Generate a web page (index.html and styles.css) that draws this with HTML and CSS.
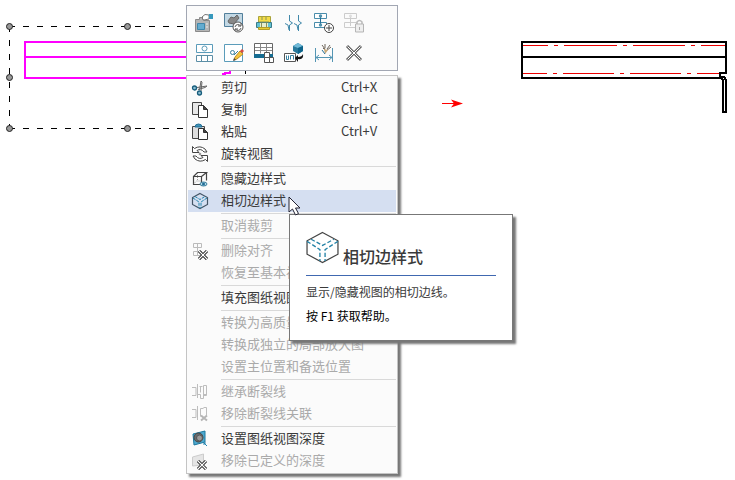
FILE: index.html
```html
<!DOCTYPE html>
<html lang="zh-CN">
<head>
<meta charset="utf-8">
<title>工程图</title>
<link rel="stylesheet" href="styles.css">
</head>
<body>
<main class="sheet">
  <svg class="drawing" aria-hidden="true" shape-rendering="crispEdges">
    <g class="selection">
      <path d="M9 26.500H245M9 128.500H245M9.500 26V128M245.500 26V128"/>
    </g>
    <path class="part selected" d="M230 78H25V42H230M25 57H230M222 74h3v-1h5v-3"/>
    <g class="handles" shape-rendering="auto">
      <circle cx="9.500" cy="26.500" r="3"/><circle cx="127.500" cy="26.500" r="3"/>
      <circle cx="9.500" cy="77.500" r="3"/>
      <circle cx="9.500" cy="128.500" r="3"/><circle cx="127.500" cy="128.500" r="3"/>
    </g>
    <path class="tangent" d="M523 45.500h25m6 0h4m6 0h53m6 0h4m6 0h52m6 0h4m6 0h25M522 73.500h25m6 0h4m6 0h51m6 0h4m6 0h51m6 0h4m6 0h23"/>
    <path class="part" d="M720 78H522V42H726V73H720V77H724L726 80V112H723V80L720 77M522 57H726"/>
    <path class="arrow-line" d="M442 103.500H454"/>
    <path class="arrow-head" shape-rendering="auto" d="M451 99.500L463 103.500L451 107.500L454 103.500Z"/>
  </svg>

  <div class="toolbar" role="toolbar" aria-label="视图工具">
    <button aria-label="属性"><svg viewBox="0 0 20 20"><path d="M1.500 6.500h4v-2h4v3h6v11h-14z" fill="#b5b5b5" stroke="#8a8a8a"/><path d="M3.500 10.500h7v6h-7z" fill="#64acd0" stroke="#3f86aa"/><path d="M8 4l3-2.500 4 .500v4l-5 1-2-1 1-1z" fill="#fff" stroke="#777"/><path d="M15 1h4v5h-4z" fill="#3799bd"/><path d="M12 11h2m-2 3h2" stroke="#eee"/></svg></button>
    <button aria-label="更新视图"><svg viewBox="0 0 20 20"><path d="M.500 .500h18v13H.500z" fill="#c3d8e4" stroke="#527f9b"/><path d="M4 8l3-4 3 1 3-3 2 3-5 6-5-1z" fill="#888" stroke="#666"/><circle cx="14" cy="14" r="5" fill="#fff" stroke="#555"/><path d="M11 14a3 3 0 0 1 5.500-1M17 15a3 3 0 0 1-5.500 1M17 10v3h-3M11 18v-2h3" fill="none" stroke="#555"/></svg></button>
    <button aria-label="显示样式"><svg viewBox="0 0 20 20"><path d="M4.500 3.500h12v7h-12z" fill="#f4dc45" stroke="#a9a23b"/><path d="M2.500 9.500h15v5h-15z" fill="#62c1d2" stroke="#397b89"/><path d="M4.500 14.500h11v2h-11z" fill="#e8cd31" stroke="#b29d2a"/><path d="M6 10h8v4H6z" fill="#e5eed0"/><path d="M8 4v3m4-3v3M7.500 10v4m5-4v4M5 9h10" stroke="#8a925c"/></svg></button>
    <button aria-label="断裂视图"><svg viewBox="0 0 20 20"><path d="M5.500 2v6l3 2-3 2v6M1 10.500l3 1.500 1 5M14.500 2v6l3 2-3 2v6M10 10.500l3 1.500 1 5" fill="none" stroke="#4189aa"/></svg></button>
    <button aria-label="添加对齐"><svg viewBox="0 0 20 20"><path d="M.500 .500h12v5H.500zM.500 9.500h12v5H.500z" fill="#fff" stroke="#4a8dab"/><path d="M6.500 3v9" stroke="#236f98"/><circle cx="6.500" cy="3" r="1.700" fill="#4f91ad"/><circle cx="6.500" cy="12" r="1.700" fill="#4f91ad"/><circle cx="15" cy="15" r="4.500" fill="#fff" stroke="#444"/><path d="M12 15h6m-3-3v6" stroke="#444"/></svg></button>
    <button aria-label="锁定对齐" disabled><svg viewBox="0 0 20 20"><path d="M.500 .500h12v5H.500zM.500 9.500h12v5H.500zM6.500 2v11" fill="none" stroke="#ccc"/><circle cx="6.500" cy="3" r="1.500" fill="#ddd"/><path d="M13 11V9q2.500-3 5 0v2" fill="none" stroke="#bbb" stroke-width="1.500"/><path d="M11.500 11h8v8h-8z" fill="#eee" stroke="#b5b5b5"/><path d="M15.500 14v3" stroke="#aaa"/></svg></button>
    <button aria-label="投影视图"><svg viewBox="0 0 20 20"><path d="M2.500 1.500h16v8h-16z" fill="#fff" stroke="#5b9cba"/><path d="M2.500 12.500h16v6h-16zM7.500 12.500v6m6-6v6" fill="#fff" stroke="#5b8ea6"/><circle cx="10.500" cy="5.500" r="2.500" fill="#fff" stroke="#5b9cba"/></svg></button>
    <button aria-label="编辑草图"><svg viewBox="0 0 20 20"><path d="M.500 1.500h18v17H.500z" fill="#fff" stroke="#5b9cba"/><circle cx="8.500" cy="9.500" r="2" fill="none" stroke="#397f9d"/><path d="M10 12l4-4" stroke="#397f9d"/><path d="M10 17l1-3 5-6 3 3-6 5z" fill="#f5c53b" stroke="#b98a2c"/><path d="M16 8l2-2 2 2-2 2z" fill="#d84a42"/><path d="M9 18l1-3 2 2z" fill="#444"/></svg></button>
    <button aria-label="表格"><svg viewBox="0 0 20 20"><path d="M.500 .500h18v14H.500z" fill="#fff" stroke="#666"/><path d="M0 11h19v4H0z" fill="#156c91"/><path d="M1 4.500h17M1 7.500h17M6.500 .500v10m6-10v10" stroke="#888"/><path d="M10.500 14.500h5v5h-5zM15.500 14.500h4v5h-4zM10.500 9.500h5v5h-5z" fill="#fff" stroke="#555"/></svg></button>
    <button aria-label="打开零件"><svg viewBox="0 0 20 20"><path d="M9 3l5-3 5 3v5l-5 3-5-3z" fill="#28799c"/><path d="M9 3l5-3 5 3-5 2z" fill="#71b9d7"/><path d="M14 5v6l5-3V3z" fill="#0d648b"/><path d="M.500 10.500h11v8H.500z" fill="#fff" stroke="#555"/><path d="M2.500 12.500v4h2v-4M6.500 16.500v-4h3v4" fill="none" stroke="#36809e"/><path d="M19 11q1 6-5 5v3l-3-4 3-3v2q4 0 5-3z" fill="#111"/></svg></button>
    <button aria-label="自动尺寸"><svg viewBox="0 0 20 20"><path d="M1.500 5v14M18.500 5v14M2 14.500h16M5 12l-3 2.500L5 17m10-5l3 2.500-3 2.500" fill="none" stroke="#5495b3"/><path d="M8 2l3 4m0-5v4m5-3l-3 4m4-2l-5 4-3-3" stroke="#6f665b" fill="none"/><path d="M10 6l4 1-3 4z" fill="#c7a878"/><path d="M8 7l3 4" stroke="#236f98"/></svg></button>
    <button aria-label="删除"><svg viewBox="0 0 20 20"><path d="M3 3l14 14M17 3L3 17" stroke="#666" stroke-width="3"/><path d="M3.500 3.500l13 13m0-13l-13 13" stroke="#fff"/></svg></button>
  </div>

  <div class="menu" role="menu">
    <button role="menuitem"><svg viewBox="0 0 18 18"><path d="M6 8.500l10-1.500-2 1.500-7 2M8.500 11l1.500-9 1 1-1 9" fill="#eee" stroke="#666"/><circle cx="3.500" cy="9" r="2" fill="#8bbccf" stroke="#175d7c" stroke-width="1.300"/><circle cx="8.500" cy="14" r="2" fill="#8bbccf" stroke="#175d7c" stroke-width="1.300"/></svg><span>剪切</span><kbd>Ctrl+X</kbd></button>
    <button role="menuitem"><svg viewBox="0 0 18 18"><path d="M1.500 1.500h9v12h-9z" fill="#e7e7e7" stroke="#444"/><path d="M7.500 4.500h5l4 4v8h-9z" fill="#fff" stroke="#333"/><path d="M12.500 4.500v4h4z" fill="#444" stroke="#333"/></svg><span>复制</span><kbd>Ctrl+C</kbd></button>
    <button role="menuitem"><svg viewBox="0 0 18 18"><path d="M1.500 3.500h12v12h-12z" fill="#dedede" stroke="#444"/><path d="M4 4q0-3 3.500-3T11 4z" fill="#4194b6" stroke="#236f98"/><path d="M7.500 5.500h5l4 4v7h-9z" fill="#fff" stroke="#333"/><path d="M12.500 5.500v4h4z" fill="#444" stroke="#333"/></svg><span>粘贴</span><kbd>Ctrl+V</kbd></button>
    <button role="menuitem"><svg viewBox="0 0 18 18"><path d="M1.500 7.500v-6l2 2Q9 0 14 4l2 3h-3Q10 3 6 5.500l2 2zM16.500 10.500v6l-2-2Q9 18 4 14l-2-3h3q3 4 7 1.500l-2-2z" fill="#fff" stroke="#444"/><circle cx="9" cy="9" r="1.300" fill="#999"/></svg><span>旋转视图</span></button>
    <hr>
    <button role="menuitem"><svg viewBox="0 0 18 18"><path d="M2.500 6.500h8v8h-8zM2.500 6.500l4-4h9l-5 4M15.500 2.500v8" fill="none" stroke="#444" stroke-width="1.200"/><path d="M6.500 3v8h4M5.500 11l-3 3" fill="none" stroke="#999" stroke-dasharray="1 1"/><ellipse cx="12.500" cy="14" rx="3.500" ry="2" fill="#b8dae8" stroke="#397f9d"/><circle cx="12.500" cy="14" r="1.500" fill="#236f98"/></svg><span>隐藏边样式</span></button>
    <button role="menuitem" class="active"><svg viewBox="0 0 18 18"><path d="M9 1.500l7.500 4v7L9 16.500l-7.500-4v-7z" fill="none" stroke="#456" stroke-width="1.200"/><path d="M2 6l6 4v6M16 6l-6 4v6M4 4.500l5 3 5-3" fill="none" stroke="#2284ad" stroke-dasharray="3 1"/></svg><span>相切边样式</span></button>
    <hr>
    <button role="menuitem" disabled><i></i><span>取消裁剪</span></button>
    <hr>
    <button role="menuitem" disabled><svg viewBox="0 0 18 18"><path d="M2.500 1.500h8v4h-8zM2.500 9.500h8v4h-8zM6.500 1.500v12" fill="none" stroke="#bbb"/><path d="M8 9l8 8m0-8l-8 8" stroke="#111" stroke-width="3"/><path d="M8 9l8 8m0-8l-8 8" stroke="#fff" stroke-width="1.200"/></svg><span>删除对齐</span></button>
    <button role="menuitem" disabled><i></i><span>恢复至基本视图</span></button>
    <hr>
    <button role="menuitem"><i></i><span>填充图纸视图</span></button>
    <hr>
    <button role="menuitem" disabled><i></i><span>转换为高质量</span></button>
    <button role="menuitem" disabled><i></i><span class="wide">转换成独立的局部放大图</span></button>
    <button role="menuitem" disabled><i></i><span class="wide">设置主位置和备选位置</span></button>
    <hr>
    <button role="menuitem" disabled><svg viewBox="0 0 18 18"><path d="M1 4.500h4v8H1M6.500 1v14M8.500 3.500h3M12.500 2.500h3v10h-3zM9.500 3.500v6M6.500 11.500h3v4h3v-4h3" fill="none" stroke="#bdbdbd"/></svg><span>继承断裂线</span></button>
    <button role="menuitem" disabled><svg viewBox="0 0 18 18"><path d="M1 4.500h4v8H1M6.500 1v14M9.500 3.500h3m0-1h3v8M9.500 3.500v8" fill="none" stroke="#bdbdbd"/><path d="M10 10.500l6 5m0-5l-6 5" stroke="#b5b5b5" stroke-width="2"/></svg><span>移除断裂线关联</span></button>
    <hr>
    <button role="menuitem"><svg viewBox="0 0 18 18"><path d="M2 4l12-3v11L3 15z" fill="#4da9d0" stroke="#1d789e"/><circle cx="7.500" cy="7.500" r="4.500" fill="#686b6d" stroke="#444"/><circle cx="8.500" cy="8" r="3" fill="#999" stroke="#555"/><path d="M13 13l3 3m-3-1v-2h2" fill="none" stroke="#2383ae"/></svg><span>设置图纸视图深度</span></button>
    <button role="menuitem" disabled><svg viewBox="0 0 18 18"><path d="M1.500 5l11-3v11l-11 1z" fill="#e5e5e5" stroke="#ccc"/><path d="M7 9l8 8m0-8l-8 8" stroke="#111" stroke-width="3"/><path d="M7 9l8 8m0-8l-8 8" stroke="#fff" stroke-width="1.200"/></svg><span>移除已定义的深度</span></button>
  </div>

  <section class="tooltip" role="tooltip">
    <header>
      <svg viewBox="0 0 32 32" aria-hidden="true"><path d="M16 1.500l15 8v13l-15 8-15-8v-13z" fill="none" stroke="#444" stroke-width="1.200"/><path d="M1 10l12.500 8v11M31 10l-12.500 8v11M5 8l11 6 11-6" fill="none" stroke="#2482a6" stroke-width="1.300" stroke-dasharray="4 2"/></svg>
      <h1>相切边样式</h1>
    </header>
    <p>显示/隐藏视图的相切边线。</p>
    <p class="help">按 F1 获取帮助。</p>
  </section>

  <svg class="pointer" viewBox="0 0 14 20" aria-hidden="true"><path d="M1 1v15l3.500-3 3 6 3-1.500-3-5.500H12z" fill="#fff" stroke="#223"/></svg>
</main>
</body>
</html>
```
FILE: styles.css
```css
* { box-sizing: border-box; }

body {
  margin: 0;
  background: #fff;
  color: #3a3a3a;
  font-family: "Noto Sans CJK SC", "Noto Sans", sans-serif;
  font-size: 13px;
}

.sheet {
  position: relative;
  min-height: 100vh;
  overflow: hidden;
}

.drawing {
  position: absolute;
  inset: 0;
  width: 100%;
  height: 100%;
}

.selection { fill: none; stroke: #000; stroke-dasharray: 6 8; }
.handles { fill: #999; stroke: #222; }
.part { fill: none; stroke: #000; stroke-width: 2; }
.part.selected { stroke: #f0f; }
.tangent { fill: none; stroke: #e00; }
.arrow-line { stroke: #f00; }
.arrow-head { fill: #f00; }

button {
  margin: 0;
  padding: 0;
  border: 0;
  background: none;
  color: inherit;
  font: inherit;
}

/* Floating tool strip */
.toolbar {
  position: absolute;
  top: 5px;
  left: 186px;
  display: grid;
  grid-template-columns: repeat(6, 30px);
  grid-auto-rows: 30px;
  width: 212px;
  padding: 2px;
  border: 1px solid #a2a7b3;
  background: #fbfbfb;
}

.toolbar button {
  display: grid;
  place-items: center;
}

.toolbar svg { width: 20px; height: 20px; }

/* Context menu */
.menu {
  position: absolute;
  top: 75px;
  left: 186px;
  width: 212px;
  padding: 1px;
  border: 1px solid #c4c4c4;
  background: #fbfbfb;
  box-shadow: 3px 3px 2px #777;
}

.menu button {
  display: grid;
  grid-template-columns: 18px 108px 1fr;
  column-gap: 12px;
  align-items: center;
  width: 100%;
  height: 22px;
  padding-left: 3px;
  line-height: 18px;
  text-align: left;
  white-space: nowrap;
}

.menu button:disabled { color: #aaa; }
.menu .active { background: #d5dff1; }
.menu svg { width: 18px; height: 18px; }
.menu span { padding-bottom: 3px; }
.menu .wide { grid-column: 2 / 4; }
.menu kbd { padding-bottom: 3px; font: inherit; }

.menu hr {
  height: 1px;
  margin: 1px 0 1px 33px;
  border: 0;
  background: #d9d9d9;
}

/* Extended tooltip */
.tooltip {
  position: absolute;
  top: 214px;
  left: 289px;
  width: 224px;
  padding: 16px;
  border: 1px solid #777;
  background: #fff;
  box-shadow: 3px 3px 2px #777;
  font-size: 12px;
}

.tooltip header {
  display: flex;
  align-items: flex-end;
  gap: 4px;
  height: 45px;
  padding-bottom: 9px;
  border-bottom: 1px solid #4068b0;
}

.tooltip header svg {
  align-self: flex-start;
  width: 33px;
  height: 33px;
}

.tooltip h1 {
  margin: 0;
  font-size: 16px;
  font-weight: 500;
  line-height: 20px;
}

.tooltip p {
  margin: 8px 0 0;
  line-height: 16px;
}

.tooltip .help { color: #000; }

.pointer {
  position: absolute;
  top: 196px;
  left: 288px;
  width: 14px;
  height: 20px;
}
```
